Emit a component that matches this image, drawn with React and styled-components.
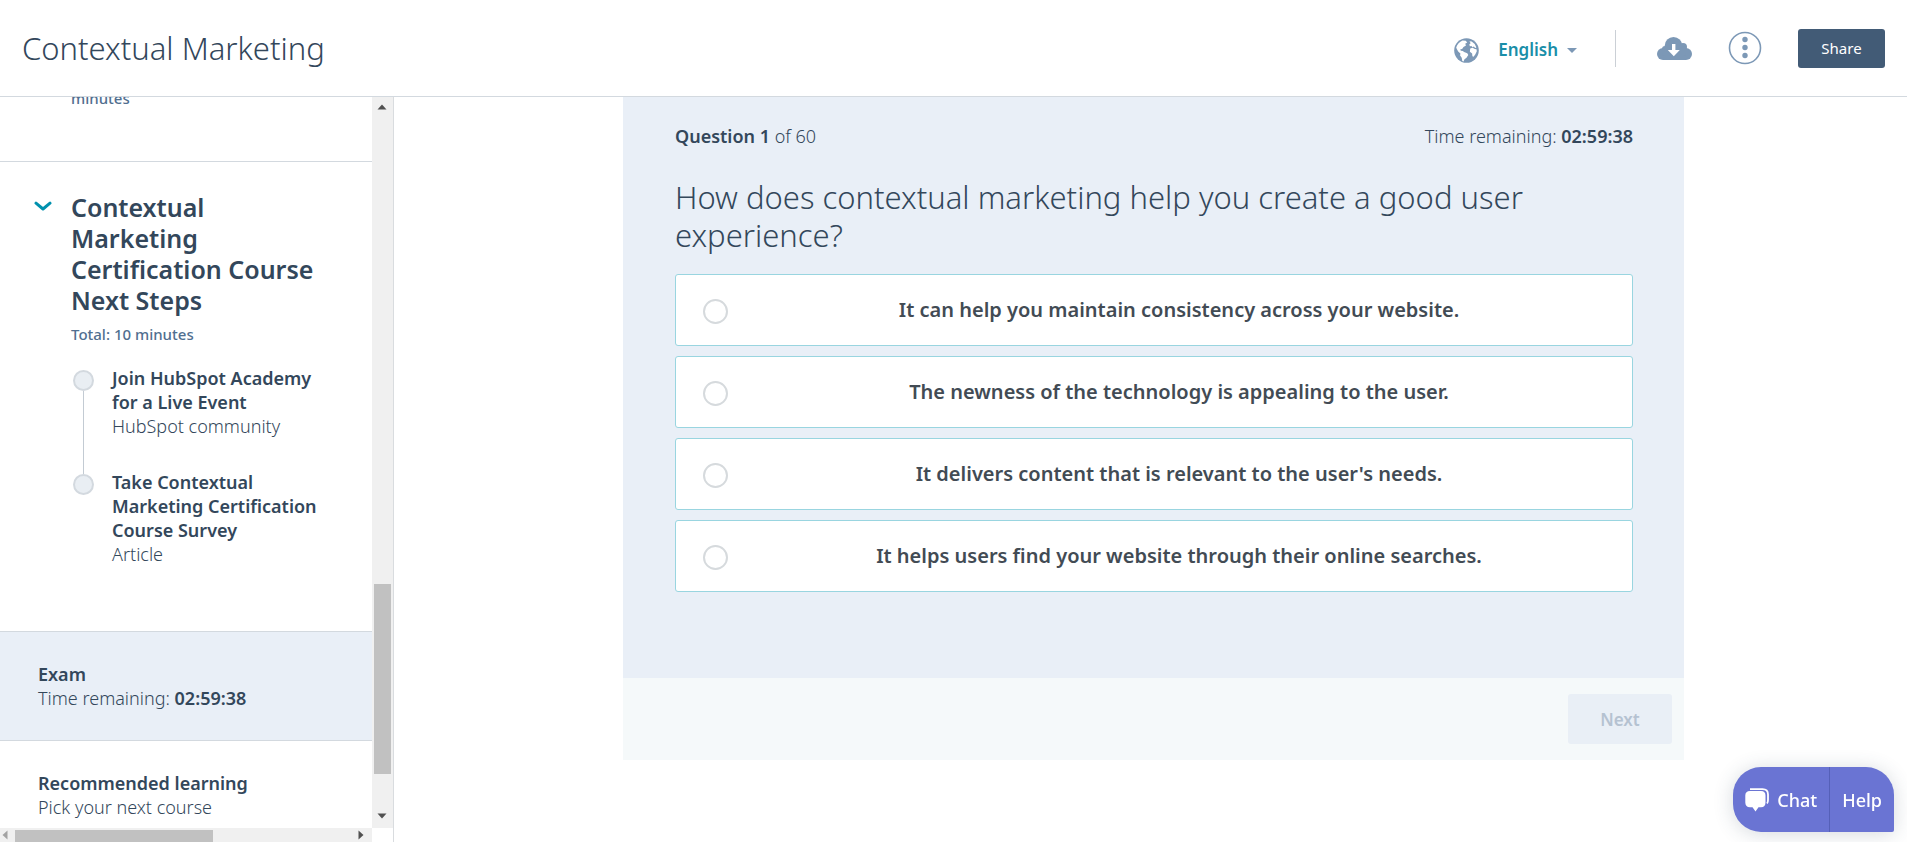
import React, { useState } from 'react';
import styled, { createGlobalStyle } from 'styled-components';

const lessons = [
  { title: 'Join HubSpot Academy for a Live Event', kind: 'HubSpot community' },
  { title: 'Take Contextual Marketing Certification Course Survey', kind: 'Article' },
];

const answers = [
  'It can help you maintain consistency across your website.',
  'The newness of the technology is appealing to the user.',
  "It delivers content that is relevant to the user's needs.",
  'It helps users find your website through their online searches.',
];

const timeLeft = '02:59:38';

function GlobeIcon() {
  return (
    <svg width="25" height="25" viewBox="0 0 25 25" aria-hidden="true">
      <circle cx="12.5" cy="12.5" r="12.3" fill="#7c98b6" />
      <g fill="#fff">
        <path d="M2.200 9.500C3.200 6.300 5.500 3.800 8.500 2.600l3.200.2 1.500 1.700-2 1.300.8 1.700-2.500 1.500-1.400 2-1.800.2.500 1.600 2 .3 1.300 1 3.200 1.200 1 1.700-1.800 2.700-2 1.600-1 2.300-1.200-.6-.6-3.300-1.600-2.200.3-2-2.200-2-1.400-2.500z" />
        <path d="M15.500 3.200l2.200.2 3 2.600 1.700 3.500-1.200.4-1.400-1.400-1.200.7-1.200-1.300-1.500.4-.6-1.700 1.300-1.300z" />
        <path d="M16.200 10.500l2.400-.7 2.200 1.300 1.700.2.300 2-1.400 3-1.800 2.500-1.200-.5-.3-2.800-2.200-1.800z" />
      </g>
    </svg>
  );
}

function CloudDownloadIcon() {
  return (
    <svg width="35" height="23" viewBox="0 0 35 23" aria-hidden="true">
      <g fill="#7c98b6">
        <circle cx="16.5" cy="8.8" r="8.8" />
        <circle cx="26" cy="10" r="4" />
        <rect x="0" y="11" width="35" height="12" rx="6" />
        <rect x="5" y="9" width="24" height="10" rx="3" />
      </g>
      <path d="M15 7h3.400v6h4.400l-6 6.200-6-6.200H15z" fill="#fff" />
    </svg>
  );
}

function MoreIcon() {
  return (
    <svg width="34" height="34" viewBox="0 0 34 34" aria-hidden="true">
      <circle cx="17" cy="17" r="15.500" fill="none" stroke="#7c98b6" strokeWidth="1.600" />
      <g fill="#7c98b6">
        <circle cx="17" cy="8.500" r="2.700" />
        <circle cx="17" cy="16.500" r="2.700" />
        <circle cx="17" cy="24.500" r="2.700" />
      </g>
    </svg>
  );
}

function ChatIcon() {
  return (
    <svg width="25" height="24" viewBox="0 0 25 24" aria-hidden="true">
      <path
        d="M5 3h11c3 0 4.500 1.500 4.500 4.500v7c0 3-1.500 4.700-4.500 4.700h-2.500L10.500 23.500 7.500 19.200H5c-3 0-4.700-1.700-4.700-4.700v-7C.3 4.500 2 3 5 3z"
        fill="#fff"
      />
      <path d="M5 1.200h12.500c3.800 0 5.500 1.800 5.500 5.300v5.500c0 1.500-.3 2.700-1 3.500" fill="none" stroke="#fff" strokeWidth="1.800" />
    </svg>
  );
}

function Arrow({ direction, color = '#505050' }) {
  const turn = { up: 0, right: 90, down: 180, left: 270 }[direction];
  return (
    <svg width="10" height="10" viewBox="0 0 10 10" aria-hidden="true">
      <path d="M.5 7.500 5 2.500l4.500 5z" fill={color} transform={`rotate(${turn} 5 5)`} />
    </svg>
  );
}

function App() {
  const [selected, setSelected] = useState(null);

  return (
    <Page>
      <GlobalStyle />
      <Header>
        <CourseTitle>Contextual Marketing</CourseTitle>
        <HeaderTools>
          <LanguageButton type="button">
            <GlobeIcon />
            <LanguageName>English</LanguageName>
            <Caret />
          </LanguageButton>
          <ToolDivider />
          <IconButton type="button" aria-label="Download">
            <CloudDownloadIcon />
          </IconButton>
          <IconButton type="button" aria-label="More options">
            <MoreIcon />
          </IconButton>
          <ShareButton type="button">Share</ShareButton>
        </HeaderTools>
      </Header>

      <Body>
        <Sidebar>
          <SidebarContent>
            <PreviousSection>
              <Duration>minutes</Duration>
            </PreviousSection>

            <Section>
              <ToggleButton type="button" aria-label="Collapse section">
                <svg width="18" height="11" viewBox="0 0 18 11" aria-hidden="true">
                  <path d="M2 2.200 9 8l7-5.800" fill="none" stroke="#0091ae" strokeWidth="3" strokeLinecap="round" strokeLinejoin="round" />
                </svg>
              </ToggleButton>
              <SectionBody>
                <SectionTitle>Contextual Marketing Certification Course Next Steps</SectionTitle>
                <Duration>Total: 10 minutes</Duration>
                <LessonList>
                  {lessons.map((lesson) => (
                    <Lesson key={lesson.title}>
                      <Track>
                        <Dot />
                        <Line />
                      </Track>
                      <div>
                        <Strong>{lesson.title}</Strong>
                        <Light>{lesson.kind}</Light>
                      </div>
                    </Lesson>
                  ))}
                </LessonList>
              </SectionBody>
            </Section>

            <SidebarLink href="#exam" $active>
              <Strong>Exam</Strong>
              <Light>
                Time remaining: <b>{timeLeft}</b>
              </Light>
            </SidebarLink>
            <SidebarLink href="#recommended">
              <Strong>Recommended learning</Strong>
              <Light>Pick your next course</Light>
            </SidebarLink>
          </SidebarContent>

          <VerticalScroll>
            <Arrow direction="up" />
            <VerticalThumb />
            <Arrow direction="down" />
          </VerticalScroll>

          <HorizontalScroll>
            <Arrow direction="left" color="#a3a3a3" />
            <HorizontalThumb />
            <Arrow direction="right" />
          </HorizontalScroll>
        </Sidebar>

        <Main>
          <Card>
            <Questions>
              <StatusRow>
                <Light as="span">
                  <b>Question 1</b> of 60
                </Light>
                <Light as="span">
                  Time remaining: <b>{timeLeft}</b>
                </Light>
              </StatusRow>
              <QuestionText id="question">How does contextual marketing help you create a good user experience?</QuestionText>
              <Options role="radiogroup" aria-labelledby="question">
                {answers.map((answer, index) => (
                  <Option key={answer} htmlFor={`answer-${index}`}>
                    <Radio
                      type="radio"
                      name="answer"
                      id={`answer-${index}`}
                      checked={selected === index}
                      onChange={() => setSelected(index)}
                    />
                    <OptionText>{answer}</OptionText>
                  </Option>
                ))}
              </Options>
            </Questions>
            <CardFooter>
              <NextButton type="button" disabled={selected === null}>
                Next
              </NextButton>
            </CardFooter>
          </Card>
        </Main>
      </Body>

      <HelpWidget>
        <WidgetButton type="button">
          <ChatIcon />
          Chat
        </WidgetButton>
        <WidgetButton type="button">Help</WidgetButton>
      </HelpWidget>
    </Page>
  );
}

const GlobalStyle = createGlobalStyle`
  * {
    box-sizing: border-box;
  }

  body {
    margin: 0;
    background-color: white;
    color: #33475b;
    font-family: 'Noto Sans', 'Liberation Sans', sans-serif;
    font-size: 18px;
    line-height: 24px;
  }

  button {
    padding: 0;
    border: none;
    background: none;
    font-family: inherit;
    cursor: pointer;
  }

  b {
    font-weight: 600;
    color: #33475b;
  }
`;

const Page = styled.div`
  display: flex;
  flex-direction: column;
  height: 100vh;
`;

const Header = styled.header`
  display: flex;
  justify-content: space-between;
  align-items: center;
  flex-shrink: 0;
  height: 97px;
  padding: 0 22px;
  border-bottom: 1px solid #d3d9df;
`;

const CourseTitle = styled.h1`
  margin: 0;
  font-size: 31px;
  line-height: 38px;
  font-weight: 300;
`;

const HeaderTools = styled.div`
  display: flex;
  align-items: center;
`;

const LanguageButton = styled.button`
  display: flex;
  align-items: center;
  margin-right: 38px;
  padding-top: 4px;
`;

const LanguageName = styled.span`
  margin: 0 9px 0 19px;
  font-size: 17px;
  line-height: 24px;
  font-weight: 600;
  color: #1a8ea8;
`;

const Caret = styled.span`
  border: 5px solid transparent;
  border-top-color: #7c98b6;
  border-bottom: none;
`;

const ToolDivider = styled.span`
  width: 1px;
  height: 37px;
  margin-right: 41px;
  background-color: #cbd0d6;
`;

const IconButton = styled.button`
  display: flex;
  margin-right: 36px;
`;

const ShareButton = styled.button`
  width: 87px;
  height: 39px;
  border-radius: 3px;
  background-color: #425b76;
  color: white;
  font-size: 15px;
  font-weight: 400;
`;

const Body = styled.div`
  display: flex;
  flex: 1;
  min-height: 0;
`;

const Sidebar = styled.aside`
  display: grid;
  grid-template-columns: 1fr 21px;
  grid-template-rows: 1fr 14px;
  flex-shrink: 0;
  width: 394px;
  border-right: 1px solid #d9dcdf;
`;

const SidebarContent = styled.div`
  min-height: 0;
  overflow: hidden;
`;

const PreviousSection = styled.div`
  display: flex;
  align-items: flex-end;
  height: 65px;
  padding: 0 50px 53px 71px;
  border-bottom: 1px solid #d3d9df;
`;

const Section = styled.section`
  display: flex;
  padding: 30px 46px 65px 34px;
`;

const ToggleButton = styled.button`
  display: flex;
  flex-shrink: 0;
  width: 37px;
  height: 28px;
  align-items: center;
`;

const SectionBody = styled.div`
  flex: 1;
`;

const SectionTitle = styled.h2`
  margin: 0 0 8px;
  font-size: 25px;
  line-height: 31px;
  font-weight: 600;
`;

const Duration = styled.div`
  font-size: 15px;
  line-height: 20px;
  font-weight: 500;
  color: #516f90;
`;

const LessonList = styled.ul`
  margin: 22px 0 0;
  padding: 0;
  list-style: none;
`;

const Line = styled.div`
  flex: 1;
  width: 1px;
  background-color: #c3cbd3;
`;

const Lesson = styled.li`
  display: flex;
  gap: 17px;

  &:not(:last-child) > div:last-child {
    padding-bottom: 32px;
  }

  &:last-child ${Line} {
    display: none;
  }
`;

const Track = styled.div`
  display: flex;
  flex-direction: column;
  align-items: center;
  margin-bottom: -4px;
  padding: 4px 1px 0 2px;
`;

const Dot = styled.span`
  width: 21px;
  height: 21px;
  border: 2px solid #d3d9df;
  border-radius: 50%;
  background-color: #e9eef3;
`;

const Strong = styled.div`
  font-weight: 600;
`;

const Light = styled.div`
  font-weight: 300;
`;

const SidebarLink = styled.a`
  display: block;
  padding: 30px 38px;
  border-top: 1px solid #d3d9df;
  background-color: ${(p) => (p.$active ? '#e9eff7' : 'white')};
  color: inherit;
  text-decoration: none;
`;

const VerticalScroll = styled.div`
  display: flex;
  flex-direction: column;
  align-items: center;
  padding: 5px 1px 7px 0;
  background-color: #f0f0f0;
`;

const VerticalThumb = styled.div`
  width: 17px;
  height: 190px;
  margin-top: auto;
  margin-bottom: 37px;
  background-color: #c1c1c1;
`;

const HorizontalScroll = styled.div`
  display: flex;
  align-items: center;
  gap: 5px;
  padding-right: 6px;
  background-color: #f0f0f0;
`;

const HorizontalThumb = styled.div`
  width: 198px;
  height: 12px;
  margin-right: auto;
  align-self: flex-end;
  background-color: #c1c1c1;
`;

const Main = styled.main`
  flex: 1;
  min-width: 0;
  padding: 0 40px 0 46px;
`;

const Card = styled.div`
  max-width: 1061px;
  margin: 0 auto;
`;

const Questions = styled.section`
  padding: 27px 51px 86px 52px;
  background-color: #e9eff7;
`;

const StatusRow = styled.div`
  display: flex;
  justify-content: space-between;
`;

const QuestionText = styled.h2`
  margin: 30px 0 20px;
  font-size: 31px;
  line-height: 38px;
  font-weight: 300;
`;

const Options = styled.div`
  display: flex;
  flex-direction: column;
  gap: 10px;
`;

const Option = styled.label`
  display: flex;
  align-items: center;
  height: 72px;
  padding: 0 27px;
  border: 1px solid #99d5e0;
  border-radius: 3px;
  background-color: white;
  cursor: pointer;
`;

const Radio = styled.input`
  appearance: none;
  flex-shrink: 0;
  width: 25px;
  height: 25px;
  margin: 2px 0 0;
  border: 2px solid #d6dadd;
  border-radius: 50%;
  background-color: white;

  &:checked {
    border: 8px solid #0091ae;
  }
`;

const OptionText = styled.span`
  flex: 1;
  padding-left: 25px;
  font-size: 20px;
  font-weight: 600;
  text-align: center;
  color: #424b54;
`;

const CardFooter = styled.footer`
  display: flex;
  justify-content: flex-end;
  padding: 16px 12px;
  background-color: #f5f9fa;
`;

const NextButton = styled.button`
  width: 104px;
  height: 50px;
  border-radius: 3px;
  background-color: #e9eff6;
  color: #b5c2d1;
  font-size: 17px;
  font-weight: 600;
`;

const HelpWidget = styled.div`
  position: fixed;
  right: 13px;
  bottom: 10px;
  display: flex;
  height: 65px;
  border-radius: 28px 28px 2px 28px;
  background-color: #6a74d3;
  box-shadow: 0 2px 20px rgba(51, 71, 91, 0.2);
`;

const WidgetButton = styled.button`
  display: flex;
  align-items: center;
  gap: 7px;
  padding: 0 12px;
  color: white;
  font-size: 18px;
  font-weight: 500;

  & + & {
    border-left: 1px solid #5560b8;
  }
`;

export default App;
